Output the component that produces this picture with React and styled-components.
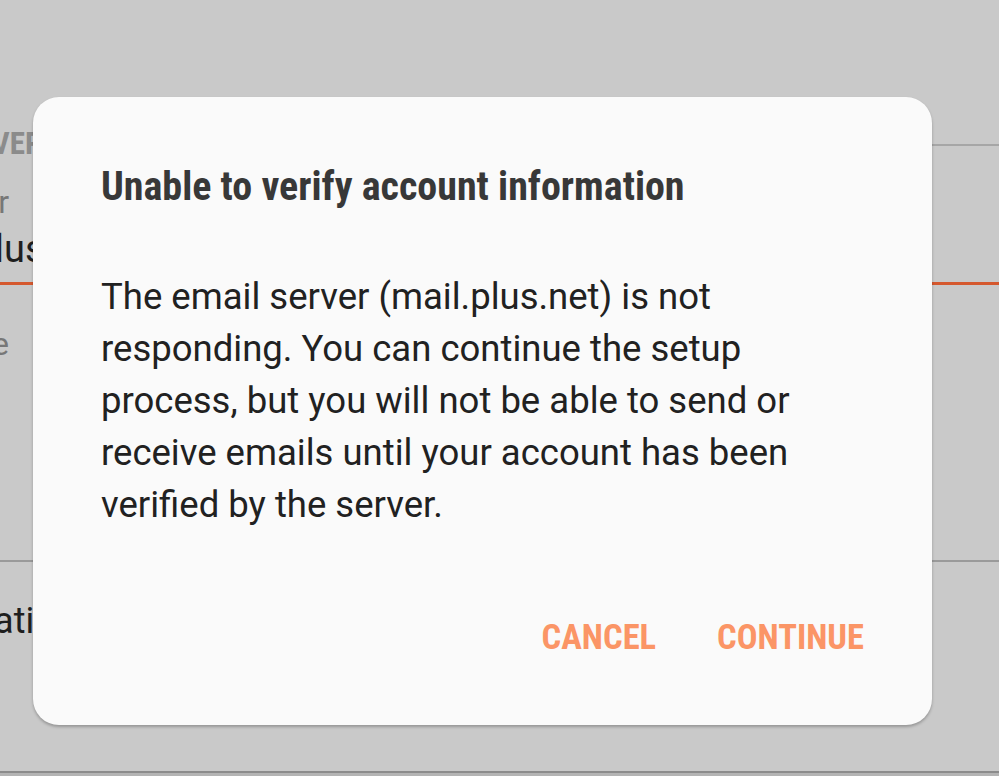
import styled, { createGlobalStyle } from 'styled-components';

const GlobalStyle = createGlobalStyle`
    html, body {
        margin: 0;
        padding: 0;
        background: #c9c9c9;
        font-family: Roboto, "Noto Sans", sans-serif;
    }
`;

const App = () => {
    return (
        <Screen>
            <GlobalStyle />
            {/* settings page behind the dialog */}
            <Page>
                <SectionRow>
                    <SectionTitle>SERVER</SectionTitle>
                    <HeadLine />
                </SectionRow>
                <Label $end={9} $top={21}>Incoming server</Label>
                <Value $shift={-109} $top={6} $size={38}>mail.plus.net</Value>
                <AccentLine />
                <Label $end={9} $top={40}>Security type</Label>
                <Divider />
                <Value $shift={-159} $top={38} $size={36}>Authentication</Value>
                <BottomLine />
            </Page>

            {/* dialog */}
            <Dialog>
                <Title>Unable to verify account information</Title>
                <Message>
                    The email server (mail.plus.net) is not responding. You can continue the setup
                    process, but you will not be able to send or receive emails until your account
                    has been verified by the server.
                </Message>
                <Actions>
                    <Button>CANCEL</Button>
                    <Button>CONTINUE</Button>
                </Actions>
            </Dialog>
        </Screen>
    );
};

export default App;

const Screen = styled.div`
    position: relative;
    width: 999px;
    height: 776px;
    overflow: hidden;
    background: #c9c9c9;
`;

const Page = styled.div`
    display: flex;
    flex-direction: column;
`;

const SectionRow = styled.div`
    margin-top: 126px;
    height: 36px;
    display: flex;
    align-items: center;
`;

const SectionTitle = styled.div`
    margin-left: -57px;
    font-family: "Roboto Condensed", Roboto, sans-serif;
    font-stretch: condensed;
    font-size: 31px;
    line-height: 36px;
    font-weight: 700;
    color: #8b8b8b;
    white-space: nowrap;
`;

const HeadLine = styled.div`
    flex: 1;
    height: 2px;
    margin-left: 300px;
    margin-top: 2px;
    background: #a6a6a6;
`;

const Label = styled.div`
    margin-top: ${({ $top }) => $top}px;
    width: ${({ $end }) => $end}px;
    display: flex;
    justify-content: flex-end;
    font-size: 32px;
    line-height: 38px;
    color: #777777;
    white-space: nowrap;
`;

const Value = styled.div`
    margin-top: ${({ $top }) => $top}px;
    margin-left: ${({ $shift }) => $shift}px;
    font-size: ${({ $size }) => $size}px;
    line-height: ${({ $size }) => $size + 6}px;
    color: #1e1e1e;
    white-space: nowrap;
`;

const AccentLine = styled.div`
    margin-top: 11px;
    height: 3px;
    background: #d5582e;
`;

const Divider = styled.div`
    margin-top: 197px;
    height: 2px;
    background: #9a9a9a;
`;

const BottomLine = styled.div`
    margin-top: 129px;
    height: 2px;
    background: #8c8c8c;
    border-bottom: 3px solid #b4b4b4;
`;

const Dialog = styled.div`
    position: absolute;
    left: 33px;
    top: 97px;
    width: 899px;
    height: 628px;
    box-sizing: border-box;
    background: #fafafa;
    border-radius: 26px;
    box-shadow: 0 2px 3px rgba(0, 0, 0, 0.25);
    padding: 64px 68px 0 68px;
    display: flex;
    flex-direction: column;
`;

const Title = styled.div`
    font-family: "Roboto Condensed", Roboto, sans-serif;
    font-stretch: condensed;
    font-size: 40px;
    font-weight: 700;
    color: #383838;
    line-height: 52px;
`;

const Message = styled.div`
    margin-top: 58px;
    font-size: 36.5px;
    line-height: 52px;
    color: #212121;
    width: 712px;
`;

const Actions = styled.div`
    margin-top: auto;
    margin-bottom: 68px;
    display: flex;
    justify-content: flex-end;
    gap: 61px;
`;

const Button = styled.div`
    font-family: "Roboto Condensed", Roboto, sans-serif;
    font-stretch: condensed;
    font-size: 34.5px;
    font-weight: 700;
    color: #fb9566;
`;
